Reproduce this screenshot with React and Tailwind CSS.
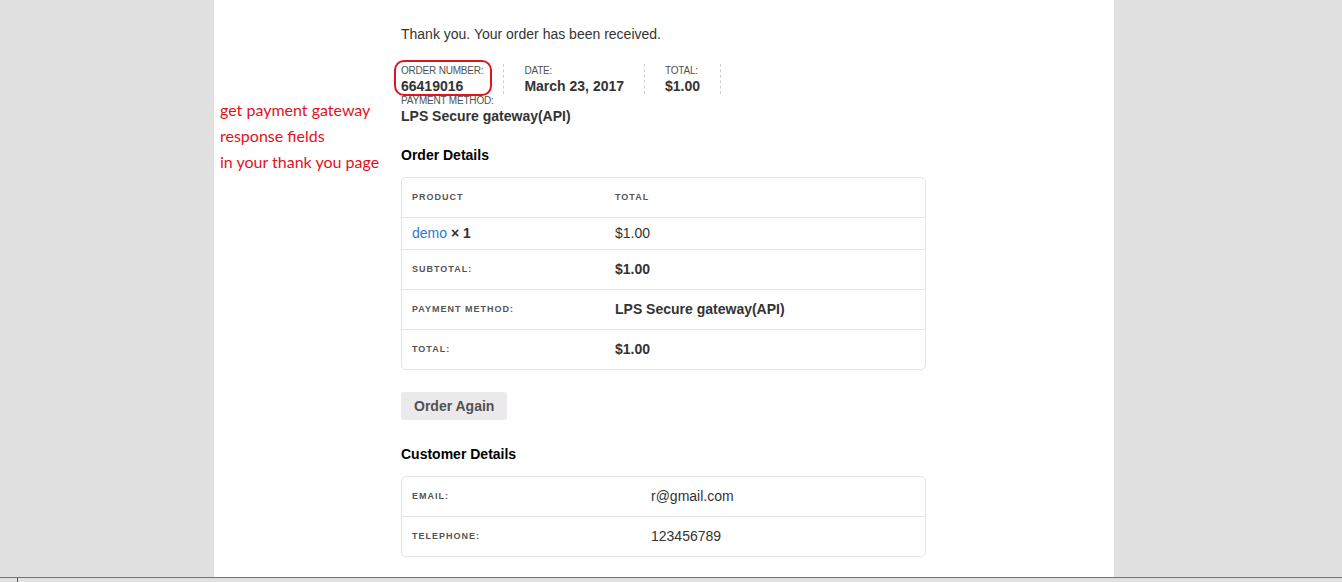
import React from 'react';

const overview = [
    { label: 'Order number:', value: '66419016', circled: true },
    { label: 'Date:', value: 'March 23, 2017' },
    { label: 'Total:', value: '$1.00' },
    { label: 'Payment method:', value: 'LPS Secure gateway(API)', last: true },
];

const orderRows = [
    { label: 'Subtotal:', value: '$1.00' },
    { label: 'Payment method:', value: 'LPS Secure gateway(API)' },
    { label: 'Total:', value: '$1.00' },
];

const customerRows = [
    { label: 'Email:', value: 'r@gmail.com' },
    { label: 'Telephone:', value: '123456789' },
];

const Label = ({ children }) => (
    <span className="text-[9px] font-bold uppercase tracking-[1px] text-[#555]">{children}</span>
);

export default function App() {
    return (
        <div
            className="h-[582px] w-[1342px] flex flex-col bg-[#e1e1e1] overflow-hidden"
            style={{ fontFamily: '"Liberation Sans", Arial, sans-serif' }}
        >
            <div className="flex-1 flex">
                <div className="relative ml-[214px] w-[900px] bg-white pl-[187px]">
                    {/* red annotation */}
                    <div
                        className="absolute left-[6px] top-[97px] text-[16px] leading-[26px] text-[#e3111c]"
                        style={{ fontFamily: 'Lato, "Open Sans", sans-serif' }}
                    >
                        <div>get payment gateway</div>
                        <div>response fields</div>
                        <div>in your thank you page</div>
                    </div>

                    <div className="w-[525px]">
                        <p className="pt-[24px] text-[14px] leading-[20px] text-[#333]">
                            Thank you. Your order has been received.
                        </p>

                        <ul className="mt-[20px] flex flex-wrap">
                            {overview.map((item) => (
                                <li
                                    key={item.label}
                                    className={
                                        item.last
                                            ? 'relative flex flex-col basis-full'
                                            : 'relative flex flex-col pr-[20px] mr-[20px] border-r border-dashed border-[#d3ced2]'
                                    }
                                >
                                    {item.circled && (
                                        <span className="absolute -left-[7px] -top-[4px] w-[98px] h-[36px] rounded-[10px] border-2 border-[#e0141e]" />
                                    )}
                                    <span className="text-[10px] leading-[14px] uppercase tracking-[-0.2px] text-[#515151]">{item.label}</span>
                                    <strong className="text-[14px] leading-[16px] font-bold text-[#333]">{item.value}</strong>
                                </li>
                            ))}
                        </ul>

                        <h2 className="mt-[21px] text-[14px] leading-[20px] font-bold text-black">Order Details</h2>

                        <div className="mt-[12px] border border-[#e4e4e4] rounded-[5px]">
                            <div className="grid grid-cols-[203px_1fr] h-[39px] items-center pl-[10px]">
                                <Label>Product</Label>
                                <Label>Total</Label>
                            </div>
                            <div className="grid grid-cols-[203px_1fr] h-[32px] items-center pl-[10px] border-t border-[#e4e4e4] text-[14px] text-[#333]">
                                <span>
                                    <span className="text-[#2b7bd1]">demo</span> <strong className="font-bold">× 1</strong>
                                </span>
                                <span>$1.00</span>
                            </div>
                            {orderRows.map((row) => (
                                <div
                                    key={row.label}
                                    className="grid grid-cols-[203px_1fr] h-[40px] items-center pl-[10px] border-t border-[#e4e4e4]"
                                >
                                    <Label>{row.label}</Label>
                                    <strong className="text-[14px] font-bold text-[#333]">{row.value}</strong>
                                </div>
                            ))}
                        </div>

                        <button className="mt-[22px] h-[28px] px-[13px] rounded-[3px] bg-[#ebe9eb] text-[14px] font-bold text-[#515151]">
                            Order Again
                        </button>

                        <h2 className="mt-[24px] text-[14px] leading-[20px] font-bold text-black">Customer Details</h2>

                        <div className="mt-[12px] border border-[#e4e4e4] rounded-[5px]">
                            {customerRows.map((row, i) => (
                                <div
                                    key={row.label}
                                    className={
                                        i === 0
                                            ? 'grid grid-cols-[239px_1fr] h-[39px] items-center pl-[10px]'
                                            : 'grid grid-cols-[239px_1fr] h-[40px] items-center pl-[10px] border-t border-[#e4e4e4]'
                                    }
                                >
                                    <Label>{row.label}</Label>
                                    <span className="text-[14px] text-[#333]">{row.value}</span>
                                </div>
                            ))}
                        </div>
                    </div>
                </div>
            </div>

            {/* bottom edge */}
            <div className="h-px shrink-0 bg-[#2a84d8]" />
            <div className="h-[4px] shrink-0 bg-[#e1e1e1] pl-[17px]">
                <div className="w-px h-full bg-[#555]" />
            </div>
        </div>
    );
}
